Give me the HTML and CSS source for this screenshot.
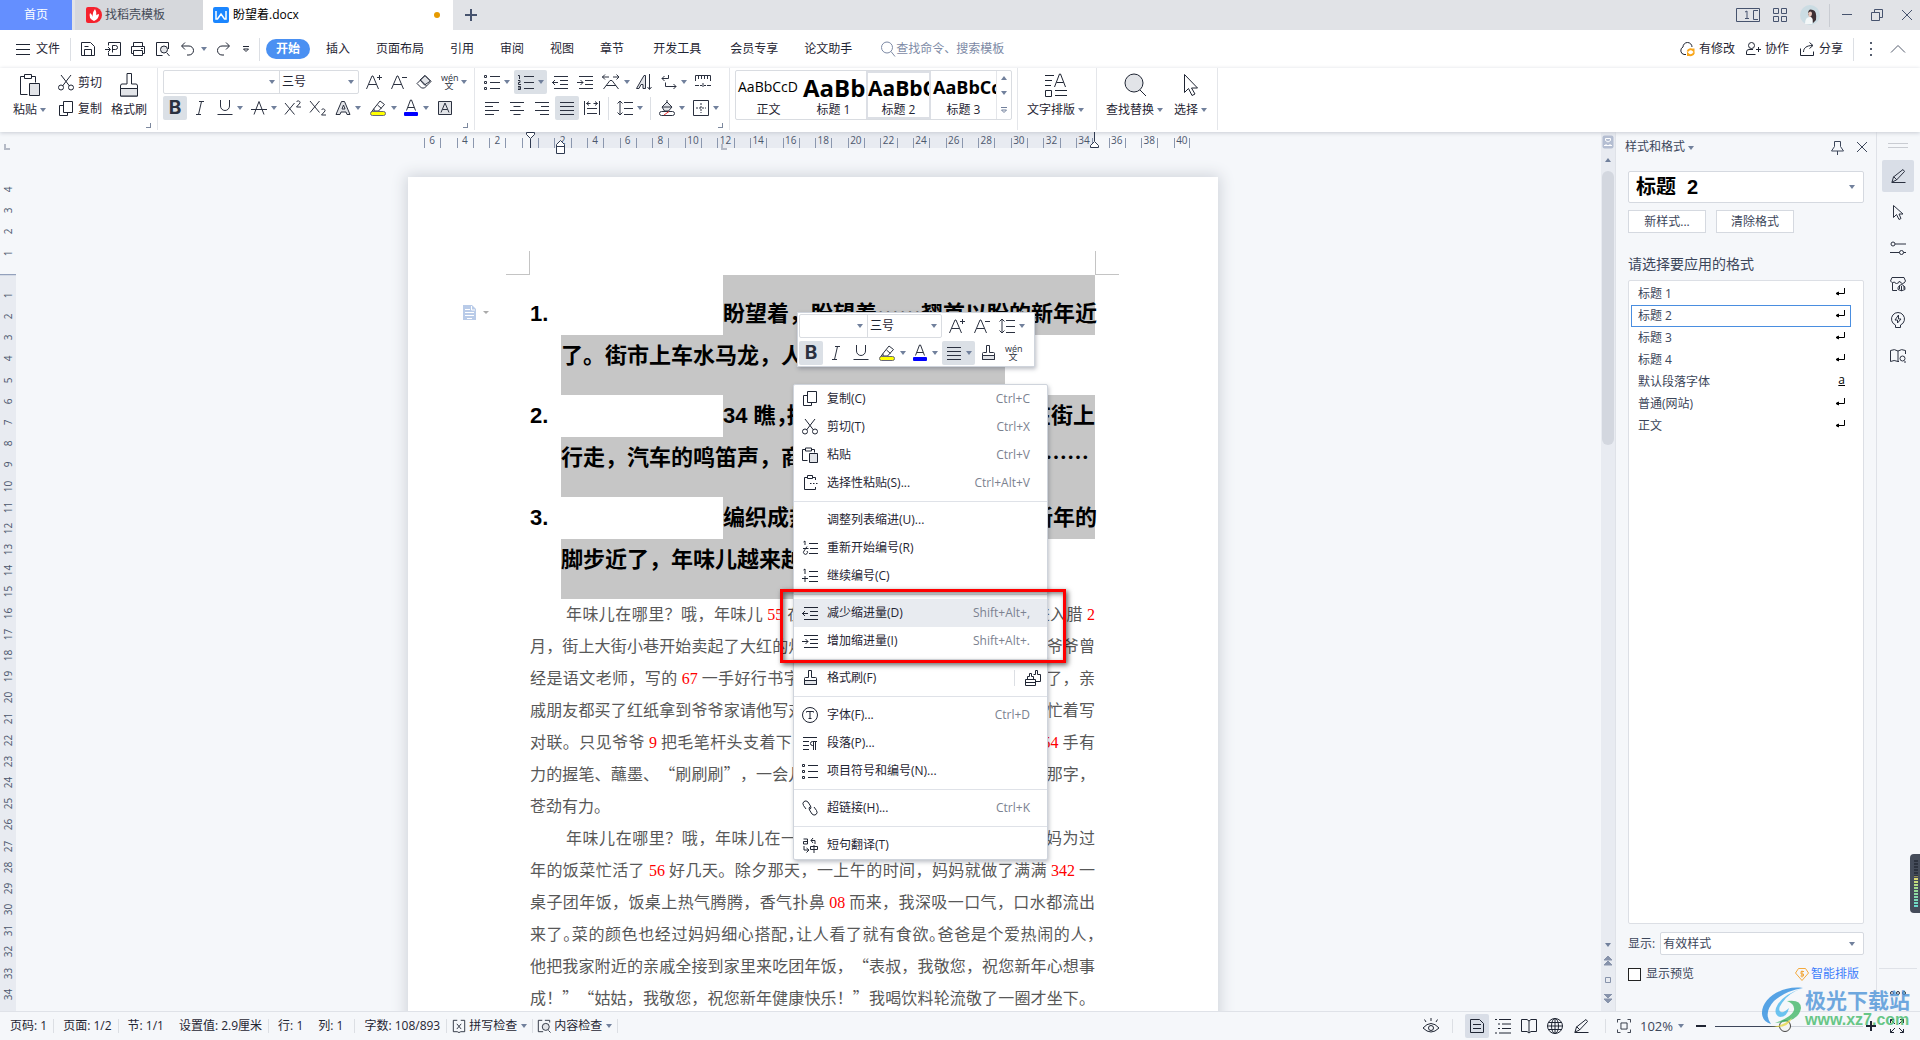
FILE: index.html
```html
<!DOCTYPE html>
<html lang="zh-CN">
<head>
<meta charset="utf-8">
<title>盼望着.docx</title>
<link rel="stylesheet" href="styles.css">
</head>
<body>
<svg class="sprite" aria-hidden="true">
  <symbol id="save" viewBox="0 0 16 16"><path d="M1.500 1.500h9l4 4v9h-13zM4.500 14V8.500h7V14M4.500 5.500h4"/></symbol>
  <symbol id="export" viewBox="0 0 16 16"><path d="M3.500 4.500v-3h12v13h-12v-3M0 8.500h5M3 6l2.500 2.500L3 11M7.500 11.500v-7h3a2 2 0 0 1 0 4h-3"/></symbol>
  <symbol id="print" viewBox="0 0 16 16"><path d="M3.500 5.500v-4h9v4M3.500 12.500h-2v-7h13v7h-2M3.500 9.500h9v5h-9zM11 7.500h2"/></symbol>
  <symbol id="preview" viewBox="0 0 16 16"><path d="M13.500 8V1.500h-12v13h6M12 12l2.500 3"/><circle cx="9" cy="8.500" r="3.500" class="g"/></symbol>
  <symbol id="undo" viewBox="0 0 16 16"><path d="M5 1.500L1.500 5 5 8.500M2 5h7a4.500 4.500 0 0 1 0 9H7"/></symbol>
  <symbol id="redo" viewBox="0 0 16 16"><path d="M11 1.500L14.500 5 11 8.500M14 5H7a4.500 4.500 0 0 0 0 9h2"/></symbol>
  <symbol id="more" viewBox="0 0 8 8"><path d="M1 1.500h6M1.500 4L4 6.500 6.500 4z"/></symbol>
  <symbol id="search" viewBox="0 0 16 16"><circle cx="7" cy="6.500" r="5.500"/><path d="M11 10.500l4 5"/></symbol>
  <symbol id="cloud" viewBox="0 0 16 16"><path d="M7 13.500H5a4 4 0 0 1-1-7.500 4.500 4.500 0 0 1 9 0"/><path class="o" d="M8.500 10.500a3.500 3.500 0 0 1 6-1V7.500M15 11.500a3.500 3.500 0 0 1-6 1.500v2" /></symbol>
  <symbol id="person" viewBox="0 0 16 16"><circle cx="6.500" cy="4.500" r="3"/><path d="M10.500 13.500H1.500V11a2.500 2.500 0 0 1 2.500-2.500h4M11 8.500h5M13.500 6v5"/></symbol>
  <symbol id="share" viewBox="0 0 16 16"><path d="M1.500 7.500v7h13v-4M4.500 11c0-4 3-6.500 9-6.500M10.500 1.500l3.500 3-3.500 3"/></symbol>
  <symbol id="up" viewBox="0 0 16 16"><path d="M1 11.500l7-7 7 7"/></symbol>
  <symbol id="paste" viewBox="0 0 24 24"><path d="M9.500 21.500h-7v-18h4M13.500 3.500h4v6M6.500 1.500h7v4h-7z"/><path class="g" d="M11.500 10.500h10v12h-10z"/></symbol>
  <symbol id="cut" viewBox="0 0 16 16"><path d="M3 0l8.500 11M13 0L4.500 11"/><circle cx="3" cy="12.500" r="2.500"/><circle cx="13" cy="12.500" r="2.500"/></symbol>
  <symbol id="copy" viewBox="0 0 16 16"><path d="M5.500 4.500h-4v10h8v-3M5.500 .500h9v11h-9z"/></symbol>
  <symbol id="brush" viewBox="0 0 20 24"><path d="M8 .500h4.500V11H17q1.500 0 1.500 2v10h-17V13q0-2 1.500-2h5z"/><path class="g" d="M1.500 15.500h17v7.500h-17z"/></symbol>
  <symbol id="brush-s" viewBox="0 0 16 16"><path d="M6.500 .500h3v7h4q1 0 1 1v6h-12v-6q0-1 1-1h3z"/><path class="g" d="M2.500 10.500h12v4h-12z"/></symbol>
  <symbol id="aplus" viewBox="0 0 16 16"><path d="M.500 15L6 2h1l5.500 13M2.500 10.500h8M11 3.500h5M13.500 1v5"/></symbol>
  <symbol id="aminus" viewBox="0 0 16 16"><path d="M.500 15L6 2h1l5.500 13M2.500 10.500h8M11 3.500h5"/></symbol>
  <symbol id="eraser" viewBox="0 0 16 16"><path class="g" d="M4 6l4.500 5 6-4L9 1.500z"/><path d="M1 9.500L9 1.500l6 6L8.500 14h-3zM4.500 6l6 6"/></symbol>
  <symbol id="italic" viewBox="0 0 16 16"><path d="M7 1.500h5M4 14.500h5M9.500 1.500l-3 13"/></symbol>
  <symbol id="under" viewBox="0 0 16 16"><path d="M3.500 0v6a4.500 4.500 0 0 0 9 0V0M.500 14.500h15"/></symbol>
  <symbol id="strike" viewBox="0 0 16 16"><path d="M3 14.500L8 1.500l5 13M0 9.500h16"/></symbol>
  <symbol id="sup" viewBox="0 0 18 16"><path d="M1 3l9.500 11.500M10.500 3L1 14.500M12.500 2c1-2 4-1 3.500 1L12.500 7H17"/></symbol>
  <symbol id="sub" viewBox="0 0 18 16"><path d="M1 1l9.500 11.500M10.500 1L1 12.500M12.500 10c1-2 4-1 3.500 1L12.500 15H17"/></symbol>
  <symbol id="afx" viewBox="0 0 16 16"><path class="g" d="M1 14.500L6.500 1.500h3L15 14.500h-3L11 12H6l-1 2.500zM7 9h3L8.500 5z"/></symbol>
  <symbol id="hl" viewBox="0 0 18 18"><path d="M5 9.500L11 2l4.500 3.500L9.500 12H5zM5 9.500L2.500 13H7M8.500 6l4 3.500"/><rect x="1.500" y="12.500" width="15" height="4" rx="2" fill="#ff0" stroke="#667"/></symbol>
  <symbol id="acol" viewBox="0 0 16 18"><path d="M3.500 11.500L7.500 1h1l4 10.500M5 8.500h6"/><rect x="1" y="13" width="14" height="4" rx="1" fill="#00f" stroke="none"/></symbol>
  <symbol id="abox" viewBox="0 0 16 16"><path class="g" d="M1.500 1.500h13v13h-13z"/><path d="M4 12.500L8 3l4 9.500M5.500 9.500h5"/></symbol>
  <symbol id="bul" viewBox="0 0 16 16"><path d="M6 2.500h10M6 8.500h10M6 14.500h10M.500 1.500h2v2h-2zM.500 7.500h2v2h-2zM.500 13.500h2v2h-2z"/></symbol>
  <symbol id="num" viewBox="0 0 16 16"><path d="M6 2.500h10M6 8.500h10M6 14.500h10M0 1.500h1.500V5M0 6.500h2v2H.500v2H3M0 12.500h2.500v3H0M0 14h2"/></symbol>
  <symbol id="outd" viewBox="0 0 16 16"><path d="M2 2.500h14M8 6.500h8M8 10.500h8M2 14.500h14M0 8.500h6M3 6L.500 8.500 3 11"/></symbol>
  <symbol id="ind" viewBox="0 0 16 16"><path d="M2 2.500h14M8 6.500h8M8 10.500h8M2 14.500h14M0 8.500h6M3.500 6L6 8.500 3.500 11"/></symbol>
  <symbol id="awide" viewBox="0 0 18 16"><path d="M1.500 15L8 6.500h2l6.500 8.500M4 11.500h10M0 3h7M3 .500L.500 3 3 5.500M11 3h6M14.500.500L17 3l-2.500 2.500"/></symbol>
  <symbol id="sort" viewBox="0 0 16 16"><path class="g" d="M.500 14.500L8 1.500h1.500v13H7v-4H5l-2 4z"/><path d="M13.500 0v15M11.500 13l2 2.500 2-2.500"/></symbol>
  <symbol id="wrap" viewBox="0 0 16 16"><path d="M7.500 1v3.500H1M3.500 2L1 4.500 3.500 7M4.500 8.500v4H15M12.500 10l2.500 2.500-2.500 2.500"/></symbol>
  <symbol id="tabs" viewBox="0 0 16 16"><path d="M.500 7V1.500h15V7M3.500 2v3M6.500 2v3M9.500 2v3M12.500 2v3M0 11.500h4M12 11.500h4M5 11.500h2M9 11.500h2M8 9v4"/></symbol>
  <symbol id="al" viewBox="0 0 16 16"><path d="M1 2.500h14M1 6.500h8M1 10.500h14M1 14.500h9"/></symbol>
  <symbol id="ac" viewBox="0 0 16 16"><path d="M1 2.500h14M4.500 6.500h7M1 10.500h14M4.500 14.500h7"/></symbol>
  <symbol id="ar" viewBox="0 0 16 16"><path d="M1 2.500h14M7 6.500h8M1 10.500h14M6 14.500h9"/></symbol>
  <symbol id="aj" viewBox="0 0 16 16"><path d="M1 2.500h14M1 6.500h14M1 10.500h14M1 14.500h14"/></symbol>
  <symbol id="dist" viewBox="0 0 16 16"><path d="M.500 1v14M15.500 1v14M2.500 3.500h4M9.500 3.500h4M5 1.500L2.500 3.500 5 5.500M11 1.500l2.500 2-2.500 2M3 8.500h10M3 13.500h10"/></symbol>
  <symbol id="lsp" viewBox="0 0 16 16"><path d="M7 2.500h9M7 8.500h9M7 14.500h9M3 1v14M.500 3.500L3 1l2.500 2.500M.500 12.500L3 15l2.500-2.500"/></symbol>
  <symbol id="fill" viewBox="0 0 16 16"><path class="g" d="M3 7l5-5 5 5-3.500 4h-4z"/><path d="M3 7l5-5 5 5M8 2V0M3 7h10"/><rect x=".500" y="11.500" width="15" height="4" rx="2" fill="#fff"/><path stroke="#e33" d="M5 15l5-3.500"/></symbol>
  <symbol id="bord" viewBox="0 0 16 16"><path d="M.500 .500h15v15h-15z"/><path stroke-dasharray="2 1" d="M8 3v10M3 8h10"/></symbol>
  <symbol id="typeset" viewBox="0 0 24 24"><path d="M1 2.500h9M1 7.500h7M1 12.500h6M1.500 17.500h6v6h-6zM11 17.500h12M11 22.500h12M10.500 14l5-13h1l5 13M12.500 9.500h7"/></symbol>
  <symbol id="find" viewBox="0 0 24 24"><circle class="g" cx="11" cy="10" r="9"/><path d="M17 17l6 6"/></symbol>
  <symbol id="cursor" viewBox="0 0 16 24"><path d="M1.500 1.500v18l4-4 3.500 7 3-1.500-3.500-6h6z"/></symbol>
  <symbol id="restart" viewBox="0 0 16 16"><path d="M7 3.500h9M8 8.500h8M7 13.500h9M1.500 2L3 1v4M1 8.500h5.500M5 6.500L2 11a2 2 0 1 0 3 0"/></symbol>
  <symbol id="cont" viewBox="0 0 16 16"><path d="M7 3.500h9M7 8.500h9M7 13.500h9M1.500 2L3 1v5M0 10.500h6M3 8v6"/></symbol>
  <symbol id="pspec" viewBox="0 0 16 16"><path d="M5 2.500H2.500v12h11V12M11 2.500h2.500V5M5.500 .500h5v3h-5zM8 8.500h1.500M11 8.500h1.500M14 8.500h1.500"/></symbol>
  <symbol id="pst" viewBox="0 0 16 16"><path d="M5.500 13.500h-5v-11h3M9.500 2.500h3v3M3.500 1h6v3h-6z"/><path class="g" d="M7.500 6.500h8v9h-8z"/></symbol>
  <symbol id="font" viewBox="0 0 16 16"><circle cx="8" cy="8" r="7.500"/><path d="M4.500 5.500v-1h7v1M8 4.500v7M6.500 11.500h3"/></symbol>
  <symbol id="para" viewBox="0 0 16 16"><path d="M1 2.500h14M1 6.500h6M1 10.500h6M1 14.500h6M11.500 7v8M13.500 7v8M15 6.500h-4.500a1.500 1.500 0 0 0 0 4h1"/></symbol>
  <symbol id="link" viewBox="0 0 16 16"><path d="M7.500 9.500q2.500-1 1-3.500L6 2Q4 0 2 1.500T1.500 5.500L4 9M8.500 6.500q-2.500 1-1 3.500L10 14q2 2 4 .500t.500-4L12 7"/></symbol>
  <symbol id="trans" viewBox="0 0 16 16"><path d="M1.500 2h4v5h-4V4.500h4M9 3.500h4V7M11 1L9 3.500 11 6M2 9v4h4M4.500 11L7 13l-2.500 2.500M8.500 9.500h7v3h-7zM12 8v8"/></symbol>
  <symbol id="pin" viewBox="0 0 16 16"><path d="M5.500 2.500h6v5l3 4.500h-12l3-4.500zM8.500 12v4"/></symbol>
  <symbol id="x" viewBox="0 0 12 12"><path d="M1 1l10 10M11 1L1 11"/></symbol>
  <symbol id="ret" viewBox="0 0 10 8"><path d="M9.500 0v5.500H1M3.500 4v3L1 5.500z" /></symbol>
  <symbol id="pen" viewBox="0 0 16 16"><path d="M1.500 14.500h14M2 14l1.500-5L13 1.500l1.500 2L6.500 12 2 14M3.500 8.500L7 12"/></symbol>
  <symbol id="arrow" viewBox="0 0 16 16"><path d="M3.500 1.500v12l3-3 2.500 5 2-1-2-4.500h4z"/></symbol>
  <symbol id="slid" viewBox="0 0 16 16"><circle cx="3" cy="4" r="2"/><circle cx="11.500" cy="12.500" r="2"/><path d="M5 4h11M0 12.500h9.500M13.500 12.500H16"/></symbol>
  <symbol id="shop" viewBox="0 0 16 16"><path d="M7 14.500H2.500V7M2 1.500h12L15.500 5q-1 2.500-3 2.500Q10 7 9.500 5 9 7.500 6.500 7.500 5 7.500 4.500 6 2 8 .500 5zM8 13.500q-.500-4 4-5 4 2 3 5-3.500 2.500-7 0zM11.500 15V10M9.500 10v3M14 10v3"/></symbol>
  <symbol id="bulb" viewBox="0 0 16 16"><path d="M5.500 13a6.500 6.500 0 1 1 5 0v2.500h-5zM8.500 3L5 8h2.500v3L11 7H8.500z"/></symbol>
  <symbol id="bookq" viewBox="0 0 16 16"><path d="M8 3v10.500M9 13.500H8q-4-2-7.500 0v-11q4-2 7.500.500 3.500-2.500 7.500-.500V6"/><circle cx="12.500" cy="10.500" r="2.500"/><path d="M15 13v2"/></symbol>
  <symbol id="book" viewBox="0 0 16 16"><path d="M8 3v12M.500 1.500H6L8 3l2-1.500h5.500v12H10L8 15l-2-1.500H.500z"/></symbol>
  <symbol id="spell" viewBox="0 0 16 16"><path d="M6 1.500H1.500v13H6l2 1 2-1h4.500v-13H10M5.500 5.500l5 6M10.500 5.500l-5 6"/></symbol>
  <symbol id="chk" viewBox="0 0 16 16"><path d="M6 1.500H1.500v13H7M9 1.500h5.500V4M13 13l2.500 2.500"/><circle class="g" cx="10" cy="9" r="4"/></symbol>
  <symbol id="eye" viewBox="0 0 18 16"><path d="M1 10q8-9 16 0-8 8-16 0zM9 3V0M4 4L2.500 1.500M14 4l1.500-2.500"/><circle cx="9" cy="10" r="2.500"/></symbol>
  <symbol id="doc" viewBox="0 0 16 16"><path d="M1.500 1.500h9l4 4v9h-13zM4 6.500h8M4 10.500h8"/></symbol>
  <symbol id="outl" viewBox="0 0 16 16"><path d="M0 1.500h2M4 1.500h12M3 6h2M7 6h9M3 10.500h2M7 10.500h9M0 15h2M4 15h12"/></symbol>
  <symbol id="globe" viewBox="0 0 16 16"><circle cx="8" cy="8" r="7.500"/><ellipse cx="8" cy="8" rx="3.500" ry="7.500"/><path d="M8 .500v15M.500 8h15M2 4.500h12M2 11.500h12"/></symbol>
  <symbol id="fit" viewBox="0 0 16 16"><path d="M.500 4V.500H4M12 .500h3.500V4M.500 12v3.500H4M12 15.500h3.500V12M4.500 4.500h7v7h-7z"/></symbol>
  <symbol id="expand" viewBox="0 0 16 16"><path d="M1.500 5V1.500H5M11 1.500h3.500V5M1.500 11v3.500H5M11 14.500h3.500V11M1.500 1.500L6 6M14.500 1.500L10 6M1.500 14.500L6 10M14.500 14.500L10 10"/></symbol>
</svg>

<header class="titlebar">
  <button class="tab tab-home">首页</button>
  <button class="tab tab-find"><svg class="i16" viewBox="0 0 16 16"><path d="M2 0h6a8 8 0 0 1 0 16H2q-2 0-2-2V2q0-2 2-2z" fill="#f5222d" stroke="none"/><path d="M8 14Q2 11 4 6q3 2 4 8zM8 14Q5 7 9 2q3 5-1 12zM8 14q0-6 5-7 0 5-5 7z" fill="#fff" stroke="none"/></svg>找稻壳模板</button>
  <button class="tab tab-doc"><svg class="i16" viewBox="0 0 16 16"><rect width="16" height="16" rx="2" fill="#1b86ff" stroke="none"/><path d="M3 4v8h1.500L8 7l3.500 5H13V4" stroke="#fff" stroke-width="1.500"/></svg>盼望着.docx<i class="dirty"></i></button>
  <button class="newtab" aria-label="新建"><svg class="i12" viewBox="0 0 12 12"><path d="M6 0v12M0 6h12" stroke-width="2"/></svg></button>
  <div class="wintools">
    <svg width="24" height="14" viewBox="0 0 24 14"><path d="M.500 .500h23v13H.500zM17.500 2.500v9M17.500 2.500H22M17.500 11.500H22M9 4l2-1v7.500M9 10.500h4"/></svg>
    <svg class="i14" viewBox="0 0 14 14"><path d="M.500 .500h5v5h-5zM8.500 .500h5v5h-5zM.500 8.500h5v5h-5zM8.500 8.500h5v5h-5z"/></svg>
    <svg class="avatar" viewBox="0 0 20 20"><circle cx="10" cy="10" r="10" fill="#cbdce3" stroke="none"/><path d="M8 9Q8 3 13 5q4 1 3 10l-3 3z" fill="#3b2f33" stroke="none"/><path d="M8 8q3-3 4 0 0 4-3 4z" fill="#eac9bd" stroke="none"/><path d="M5 19q0-8 6-7 3 2 1 7z" fill="#f3f7f8" stroke="none"/></svg>
    <i class="vline"></i>
    <svg class="i12" viewBox="0 0 12 12"><path d="M1 5.500h10"/></svg>
    <svg class="i12" viewBox="0 0 12 12"><path d="M.500 3.500h8v8h-8zM3.500 3V.500h8v8H9"/></svg>
    <svg class="i12"><use href="#x"/></svg>
  </div>
</header>

<nav class="menubar">
  <button class="file"><svg class="i16" viewBox="0 0 16 16"><path d="M1 3.500h14M1 8.500h14M1 13.500h14"/></svg>文件</button>
  <i class="vline"></i>
  <div class="quick">
    <svg class="i16"><use href="#save"/></svg><svg class="i16"><use href="#export"/></svg><svg class="i16"><use href="#print"/></svg><svg class="i16"><use href="#preview"/></svg><svg class="i16"><use href="#undo"/></svg>
  </div>
  <i class="caret"></i>
  <svg class="i16 redo"><use href="#redo"/></svg>
  <svg class="i8"><use href="#more"/></svg>
  <i class="vline"></i>
  <div class="menus">
    <button class="on">开始</button><button>插入</button><button>页面布局</button><button>引用</button><button>审阅</button><button>视图</button><button>章节</button><button class="wide">开发工具</button><button class="wide">会员专享</button><button>论文助手</button>
  </div>
  <label class="search"><svg class="i16"><use href="#search"/></svg><input placeholder="查找命令、搜索模板" aria-label="查找"></label>
  <div class="cloud">
    <a href="#"><svg class="i16"><use href="#cloud"/></svg>有修改</a>
    <a href="#"><svg class="i16"><use href="#person"/></svg>协作</a>
    <a href="#"><svg class="i16"><use href="#share"/></svg>分享</a>
    <i class="vline"></i><i class="dots"></i><svg class="i16"><use href="#up"/></svg>
  </div>
</nav>

<section class="ribbon">
  <div class="group clip">
    <button class="big"><svg class="i24"><use href="#paste"/></svg><span>粘贴<i class="caret"></i></span></button>
    <div class="stack">
      <button><svg class="i16"><use href="#cut"/></svg>剪切</button>
      <button><svg class="i16"><use href="#copy"/></svg>复制</button>
    </div>
    <button class="big"><svg width="20" height="24"><use href="#brush"/></svg><span>格式刷</span></button>
    <i class="corner"></i>
  </div>
  <div class="group rows">
    <div class="row">
      <div class="fonts">
        <label class="field fam"><select aria-label="字体"><option></option></select><i class="caret"></i></label>
        <label class="field size"><select aria-label="字号"><option>三号</option></select><i class="caret"></i></label>
      </div>
      <button class="tb"><svg class="i16"><use href="#aplus"/></svg></button>
      <button class="tb"><svg class="i16"><use href="#aminus"/></svg></button>
      <button class="tb"><svg class="i16"><use href="#eraser"/></svg></button>
      <button class="tb dd"><span class="wen">wén<b>文</b></span><i class="caret"></i></button>
    </div>
    <div class="row">
      <button class="tb on bold">B</button>
      <button class="tb"><svg class="i16"><use href="#italic"/></svg></button>
      <button class="tb dd"><svg class="i16"><use href="#under"/></svg><i class="caret"></i></button>
      <button class="tb dd"><svg class="i16"><use href="#strike"/></svg><i class="caret"></i></button>
      <button class="tb"><svg width="18" height="16"><use href="#sup"/></svg></button>
      <button class="tb"><svg width="18" height="16"><use href="#sub"/></svg></button>
      <button class="tb dd"><svg class="i16"><use href="#afx"/></svg><i class="caret"></i></button>
      <button class="tb dd"><svg class="i18"><use href="#hl"/></svg><i class="caret"></i></button>
      <button class="tb dd"><svg width="16" height="18"><use href="#acol"/></svg><i class="caret"></i></button>
      <button class="tb"><svg class="i16"><use href="#abox"/></svg></button>
    </div>
    <i class="corner"></i>
  </div>
  <div class="group rows">
    <div class="row">
      <button class="tb dd"><svg class="i16"><use href="#bul"/></svg><i class="caret"></i></button>
      <button class="tb dd on"><svg class="i16"><use href="#num"/></svg><i class="caret"></i></button>
      <button class="tb"><svg class="i16"><use href="#outd"/></svg></button>
      <button class="tb"><svg class="i16"><use href="#ind"/></svg></button>
      <button class="tb dd"><svg width="18" height="16"><use href="#awide"/></svg><i class="caret"></i></button>
      <button class="tb"><svg class="i16"><use href="#sort"/></svg></button>
      <button class="tb dd"><svg class="i16"><use href="#wrap"/></svg><i class="caret"></i></button>
      <button class="tb"><svg class="i16"><use href="#tabs"/></svg></button>
    </div>
    <div class="row">
      <button class="tb"><svg class="i16"><use href="#al"/></svg></button>
      <button class="tb"><svg class="i16"><use href="#ac"/></svg></button>
      <button class="tb"><svg class="i16"><use href="#ar"/></svg></button>
      <button class="tb on"><svg class="i16"><use href="#aj"/></svg></button>
      <button class="tb"><svg class="i16"><use href="#dist"/></svg></button>
      <i class="vline"></i>
      <button class="tb dd"><svg class="i16"><use href="#lsp"/></svg><i class="caret"></i></button>
      <i class="vline"></i>
      <button class="tb dd"><svg class="i16"><use href="#fill"/></svg><i class="caret"></i></button>
      <button class="tb dd"><svg class="i16"><use href="#bord"/></svg><i class="caret"></i></button>
    </div>
    <i class="corner"></i>
  </div>
  <div class="group gal">
    <div class="gallery">
      <button><span class="s0">AaBbCcD</span>正文</button>
      <button><span class="s1">AaBb</span>标题 1</button>
      <button class="on"><span class="s2">AaBbC</span>标题 2</button>
      <button><span class="s3">AaBbCc</span>标题 3</button>
      <div class="gscroll"><i class="caret flip"></i><i class="caret"></i><svg class="i8"><use href="#more"/></svg></div>
    </div>
  </div>
  <div class="group tools"><button class="big"><svg class="i24"><use href="#typeset"/></svg><span>文字排版<i class="caret"></i></span></button></div>
  <div class="group tools"><button class="big"><svg class="i24"><use href="#find"/></svg><span>查找替换<i class="caret"></i></span></button>
  <button class="big"><svg width="16" height="24"><use href="#cursor"/></svg><span>选择<i class="caret"></i></span></button></div>
</section>

<main class="work">
  <div class="vruler"><i class="tabmark"></i>
    <div class="vnums"><span>4</span><span>3</span><span>2</span><span>1</span><span class="zero"></span><span>1</span><span>2</span><span>3</span><span>4</span><span>5</span><span>6</span><span>7</span><span>8</span><span>9</span><span>10</span><span>11</span><span>12</span><span>13</span><span>14</span><span>15</span><span>16</span><span>17</span><span>18</span><span>19</span><span>20</span><span>21</span><span>22</span><span>23</span><span>24</span><span>25</span><span>26</span><span>27</span><span>28</span><span>29</span><span>30</span><span>31</span><span>32</span><span>33</span><span>34</span></div>
  </div>
  <div class="canvas">
    <div class="hruler"><div class="hnums"><span>6</span><span></span><span>4</span><span></span><span>2</span><span></span><span></span><span></span><span>2</span><span></span><span>4</span><span></span><span>6</span><span></span><span>8</span><span></span><span>10</span><span></span><span>12</span><span></span><span>14</span><span></span><span>16</span><span></span><span>18</span><span></span><span>20</span><span></span><span>22</span><span></span><span>24</span><span></span><span>26</span><span></span><span>28</span><span></span><span>30</span><span></span><span>32</span><span></span><span>34</span><span></span><span>36</span><span></span><span>38</span><span></span><span>40</span></div>
      <svg class="mk first" width="9" height="16" viewBox="0 0 9 16"><path fill="#fff" d="M.500 .500h8v2l-4 4-4-4z"/><path d="M4.500 7v9"/></svg>
      <svg class="mk hang" width="9" height="14" viewBox="0 0 9 14"><path fill="#fff" d="M.500 13.500v-9l4-4 4 4v9zM.500 6.500h8"/></svg>
      <svg class="mk right" width="9" height="16" viewBox="0 0 9 16"><path fill="#fff" d="M.500 15.500v-2l4-4 4 4v2zM4.500 0v9"/></svg>
      <i class="mk tabmark"></i>
    </div>
    <article class="page">
      <div class="crops"><i></i><i></i></div>
      <svg class="smart" width="28" height="16" viewBox="0 0 28 16"><path d="M0 0h9l4 4v11H0z" fill="#b9cbe8" stroke="none"/><path stroke="#fff" d="M2 4.500h5M2 7.500h9M2 10.500h9M4 13.500h5M8.500 1v4H12"/><path d="M20 6h6l-3 3z" fill="#aaa" stroke="none"/></svg>
      <ol class="heads">
        <li><div class="h first"><b>1.</b><span>盼望着，盼望着<em class="dot">……</em>翘首以盼的新年近</span></div><div class="h next"><span>了。街市上车水马龙，人来人往，热闹非凡。</span></div></li>
        <li><div class="h"><b>2.</b><span>34 瞧<em class="half">，</em>拥挤的人群，三三两两走在街上</span></div><div class="h next full"><span>行走，汽车的鸣笛声，商贩的叫卖声，孩子的笑声<em class="dot">……</em></span></div></li>
        <li><div class="h"><b>3.</b><span>编织成热闹而欢快的乐章，预示新年的</span></div><div class="h next"><span>脚步近了，年味儿越来越浓了。</span></div></li>
      </ol>
      <div class="body">
        <p class="ind">年味儿在哪里？哦，年味儿 <b>55</b> 在大街小巷的灯笼里。每年只要一进入腊 <b>2</b></p>
        <p>月，街上大街小巷开始卖起了大红的灯笼、对联和各种各样的年货。我的爷爷曾</p>
        <p>经是语文老师，写的 <b>67</b> 一手好行书字体，每逢到年关他就忙得不可开交了，亲</p>
        <p>戚朋友都买了红纸拿到爷爷家请他写对联，贴在家门口，爷爷一整天都在忙着写</p>
        <p>对联。只见爷爷 <b>9</b> 把毛笔杆头支着下巴，沉思了一会儿，然后提起笔用 <b>54</b> 手有</p>
        <p>力的握笔、蘸墨、“刷刷刷”，一会儿工夫一副对联就写好了，瞧瞧他的那字，</p>
        <p class="end">苍劲有力。</p>
        <p class="ind">年味儿在哪里？哦，年味儿在一桌热气腾腾的年夜饭里，奶奶和妈妈为过</p>
        <p>年的饭菜忙活了 <b>56</b> 好几天。除夕那天，一上午的时间，妈妈就做了满满 <b>342</b> 一</p>
        <p>桌子团年饭，饭桌上热气腾腾，香气扑鼻 <b>08</b> 而来，我深吸一口气，口水都流出</p>
        <p class="tight">来了。菜的颜色也经过妈妈细心搭配，让人看了就有食欲。爸爸是个爱热闹的人，</p>
        <p>他把我家附近的亲戚全接到家里来吃团年饭，“表叔，我敬您，祝您新年心想事</p>
        <p>成！”“姑姑，我敬您，祝您新年健康快乐！”我喝饮料轮流敬了一圈才坐下。</p>
      </div>

      <div class="mini">
        <div class="row">
          <div class="fonts">
            <label class="field fam"><select aria-label="字体"><option></option></select><i class="caret"></i></label>
            <label class="field size"><select aria-label="字号"><option>三号</option></select><i class="caret"></i></label>
          </div>
          <button class="tb"><svg class="i16"><use href="#aplus"/></svg></button>
          <button class="tb"><svg class="i16"><use href="#aminus"/></svg></button>
          <button class="tb dd"><svg class="i16"><use href="#lsp"/></svg><i class="caret"></i></button>
        </div>
        <div class="row">
          <button class="tb on bold">B</button>
          <button class="tb"><svg class="i16"><use href="#italic"/></svg></button>
          <button class="tb"><svg class="i16"><use href="#under"/></svg></button>
          <button class="tb dd"><svg class="i18"><use href="#hl"/></svg><i class="caret"></i></button>
          <button class="tb dd"><svg width="16" height="18"><use href="#acol"/></svg><i class="caret"></i></button>
          <button class="tb dd on"><svg class="i16"><use href="#aj"/></svg><i class="caret"></i></button>
          <button class="tb"><svg class="i16"><use href="#brush-s"/></svg></button>
          <button class="tb"><span class="wen">wén<b>文</b></span></button>
        </div>
      </div>

      <div class="ctx">
        <button><svg class="i16"><use href="#copy"/></svg>复制(C)<kbd>Ctrl+C</kbd></button>
        <button><svg class="i16"><use href="#cut"/></svg>剪切(T)<kbd>Ctrl+X</kbd></button>
        <button><svg class="i16"><use href="#pst"/></svg>粘贴<kbd>Ctrl+V</kbd></button>
        <button><svg class="i16"><use href="#pspec"/></svg>选择性粘贴(S)...<kbd>Ctrl+Alt+V</kbd></button>
        <hr>
        <button><i class="i16"></i>调整列表缩进(U)...</button>
        <button><svg class="i16"><use href="#restart"/></svg>重新开始编号(R)</button>
        <button><svg class="i16"><use href="#cont"/></svg>继续编号(C)</button>
        <hr>
        <button class="on"><svg class="i16"><use href="#outd"/></svg>减少缩进量(D)<kbd>Shift+Alt+,</kbd></button>
        <button><svg class="i16"><use href="#ind"/></svg>增加缩进量(I)<kbd>Shift+Alt+.</kbd></button>
        <hr>
        <button class="split"><svg class="i16"><use href="#brush-s"/></svg>格式刷(F)<i class="vline"></i><svg class="i18" viewBox="0 0 18 18"><path d="M3.500 10.500v-3h2v-3h2v3h2v3M1.500 16.500v-6h10v6zM1.500 13.500h10M9.500 5.500h2v-4h2v4h3v7H12"/></svg></button>
        <hr>
        <button><svg class="i16"><use href="#font"/></svg>字体(F)...<kbd>Ctrl+D</kbd></button>
        <button><svg class="i16"><use href="#para"/></svg>段落(P)...</button>
        <button><svg class="i16"><use href="#bul"/></svg>项目符号和编号(N)...</button>
        <hr>
        <button><svg class="i16"><use href="#link"/></svg>超链接(H)...<kbd>Ctrl+K</kbd></button>
        <hr>
        <button><svg class="i16"><use href="#trans"/></svg>短句翻译(T)</button>
      </div>
      <div class="redbox"></div>
    </article>
  </div>

  <div class="vscroll">
    <svg width="12" height="14" viewBox="0 0 12 14"><rect x=".500" y=".500" width="11" height="13" rx="2" fill="#b4bed2" stroke="none"/><path d="M3.500 3.500h5v2L6 7 3.500 5.500zM2 10.500h8M4 9v2M8 9v2" stroke="#fff"/></svg>
    <i class="caret flip"></i>
    <div class="thumb"></div>
    <div class="nav"><i class="caret"></i><svg class="i10" viewBox="0 0 10 10"><path d="M5 0l4 4H1zM5 5l4 4H1z"/></svg><svg class="i10" viewBox="0 0 10 10"><path class="o2" d="M2.500 2.500h5v5h-5z"/></svg><svg class="i10" viewBox="0 0 10 10"><path d="M5 4l4-4H1zM5 9l4-4H1z"/></svg></div>
  </div>

  <aside class="panel">
    <div class="phead"><span>样式和格式<i class="caret"></i></span><svg class="i16"><use href="#pin"/></svg><svg class="i12"><use href="#x"/></svg></div>
    <label class="field cur"><select aria-label="当前样式"><option>标题&nbsp; 2</option></select><i class="caret"></i></label>
    <div class="pbtns"><button>新样式...</button><button>清除格式</button></div>
    <h2>请选择要应用的格式</h2>
    <div class="styles">
      <button>标题 1<svg width="10" height="8"><use href="#ret"/></svg></button>
      <button class="on">标题 2<svg width="10" height="8"><use href="#ret"/></svg></button>
      <button>标题 3<svg width="10" height="8"><use href="#ret"/></svg></button>
      <button>标题 4<svg width="10" height="8"><use href="#ret"/></svg></button>
      <button>默认段落字体<u>a</u></button>
      <button>普通(网站)<svg width="10" height="8"><use href="#ret"/></svg></button>
      <button>正文<svg width="10" height="8"><use href="#ret"/></svg></button>
    </div>
    <div class="show"><label for="show">显示:</label><span class="field"><select id="show"><option>有效样式</option></select><i class="caret"></i></span></div>
    <div class="prev"><label><input type="checkbox">显示预览</label><a href="#"><svg class="i14" viewBox="0 0 14 14"><path d="M3.500 1.500h7L13.500 6 7 13.500.500 6zM9 4.500H6v2.500h2.500V9H5.500M7 3.500v7"/></svg>智能排版</a></div>
  </aside>

  <aside class="side">
    <i class="grip"></i>
    <button class="on"><svg class="i16"><use href="#pen"/></svg></button>
    <button><svg class="i16"><use href="#arrow"/></svg></button>
    <button><svg class="i16"><use href="#slid"/></svg></button>
    <button><svg class="i16"><use href="#shop"/></svg></button>
    <button><svg class="i16"><use href="#bulb"/></svg></button>
    <button><svg class="i16"><use href="#bookq"/></svg></button>
    <i class="rule"></i>
    <svg width="16" height="6" viewBox="0 0 16 6"><circle cx="2" cy="3" r="1.500"/><circle cx="8" cy="3" r="1.500"/><circle cx="14" cy="3" r="1.500"/></svg>
  </aside>
  <div class="meter"></div>
</main>

<footer class="status">
  <span>页码: 1</span><i class="vline"></i><span>页面: 1/2</span><i class="vline"></i><span>节: 1/1</span><span>设置值: 2.9厘米</span><i class="vline"></i><span>行: 1</span><span>列: 1</span><i class="vline far"></i><span>字数: 108/893</span><i class="vline near"></i>
  <button><svg class="i14"><use href="#spell"/></svg>拼写检查<i class="caret"></i></button><i class="vline"></i>
  <button><svg class="i14"><use href="#chk"/></svg>内容检查<i class="caret"></i></button><i class="vline"></i>
  <div class="views">
    <svg width="18" height="16"><use href="#eye"/></svg><i class="vline"></i>
    <button class="on"><svg class="i16"><use href="#doc"/></svg></button>
    <button><svg class="i16"><use href="#outl"/></svg></button>
    <button><svg class="i16"><use href="#book"/></svg></button>
    <button><svg class="i16"><use href="#globe"/></svg></button>
    <button><svg class="i16"><use href="#pen"/></svg></button>
    <i class="vline"></i>
  </div>
  <div class="zoom">
    <svg class="i14"><use href="#fit"/></svg><span>102%</span><i class="caret"></i>
    <svg class="i12" viewBox="0 0 12 12"><path d="M1 6h10" stroke-width="2"/></svg>
    <input type="range" min="0" max="100" value="47" aria-label="缩放">
    <svg class="i12" viewBox="0 0 12 12"><path d="M1 6h10M6 1v10" stroke-width="2"/></svg>
    <svg class="i16"><use href="#expand"/></svg>
  </div>
</footer>

<div class="mark">
  <svg width="44" height="42" viewBox="0 0 44 42"><g stroke="none"><path fill="#2f8fe0" d="M42 1C20-2 0 12 1 27q1 8 9 10Q2 26 13 14 24 4 42 1z"/><path fill="#4bb7ee" d="M42 1Q20 8 15 21q-2 7 4 9 7 0 9-9-5 5-8 4-4-2 1-9Q27 6 42 1z"/><path fill="#44b86a" d="M26 14q14-2 14 7-2 14-26 15 17-6 19-13 1-6-7-9z"/><path fill="#e8d94a" d="M4 40q16 1 27-9-4 10-17 9z"/></g></svg>
  <div><strong>极光下载站</strong><span>www.xz7.com</span></div>
</div>
</body>
</html>
```
FILE: styles.css
```css
* { box-sizing: border-box; }
body {
  margin: 0;
  height: 100vh;
  display: flex;
  flex-direction: column;
  overflow: hidden;
  position: relative;
  background: #f5f7fa;
  color: #1f2533;
  font: 12px/16px "Open Sans", "Noto Sans CJK SC", sans-serif;
}
button, select, input { font: inherit; color: inherit; }
button { border: 0; padding: 0; background: none; }
a { color: inherit; text-decoration: none; }
svg { fill: none; stroke: currentColor; flex: none; display: block; }
.sprite { display: none; }
.g { fill: #e2e4e8; }
.o { stroke: #f9a61a; stroke-width: 2; }
.i8 { width: 8px; height: 8px; }
.i10 { width: 10px; height: 10px; }
.i12 { width: 12px; height: 12px; }
.i14 { width: 14px; height: 14px; }
.i16 { width: 16px; height: 16px; }
.i18 { width: 18px; height: 18px; }
.i24 { width: 24px; height: 24px; }
.caret {
  display: inline-block;
  flex: none;
  border: 3px solid transparent;
  border-top: 4px solid #71809c;
  border-bottom: 0;
}
.caret.flip { transform: rotate(180deg); }
.vline { flex: none; width: 1px; height: 23px; background: #dcdfe4; }

/* title bar */
.titlebar { height: 30px; flex: none; display: flex; background: #e1e3e7; }
.tab { display: flex; align-items: center; gap: 4px; }
.tab-home { width: 72px; justify-content: center; background: #648fff; color: #fff; margin-right: 3px; }
.tab-find { width: 128px; padding-left: 11px; gap: 3px; background: #d6d8dc; color: #444a57; }
.tab-doc { width: 250px; padding: 0 13px 0 10px; background: #fff; color: #000; }
.dirty { width: 6px; height: 6px; border-radius: 3px; background: #e69a00; margin-left: auto; }
.newtab { width: 36px; display: flex; align-items: center; justify-content: center; color: #46536e; }
.wintools { margin-left: auto; display: flex; align-items: center; padding-right: 4px; gap: 13px; color: #46536e; }
.wintools .i12 { margin-left: 2px; margin-right: 3px; }
.wintools .vline { margin: 0 -4px 0 -4px; background: #c9ccd2; }
.avatar { width: 20px; height: 20px; }

/* menu bar */
.menubar { height: 38px; flex: none; display: flex; align-items: center; background: #fff; padding-left: 15px; }
.file { display: flex; align-items: center; gap: 5px; margin-right: 10px; }
.quick { display: flex; gap: 9px; margin: 0 5px 0 9px; }
.redo { margin: 0 11px 0 8px; }
.menubar .i8 { margin-right: 9px; }
.menus { display: flex; padding-left: 6px; }
.menus button { height: 20px; padding: 0 10px; margin-right: 6px; border-radius: 10px; }
.menus .wide { margin: 0 6px 0 3px; }
.menus .on { background: #4a90f2; color: #fff; font-weight: bold; }
.search { display: flex; align-items: center; margin-left: 12px; color: #7d8aa5; }
.search input { border: 0; outline: 0; padding: 0; width: 130px; }
.search input::placeholder { color: #7d8aa5; }
.cloud { margin-left: auto; display: flex; align-items: center; gap: 10px; padding-right: 14px; color: #555d6e; }
.cloud a { display: flex; align-items: center; gap: 4px; color: #1f2533; }
.dots { width: 2px; height: 14px; margin: 0 8px 0 6px; background: repeating-linear-gradient(#555d6e 0 2px, transparent 2px 6px); }

/* ribbon */
.ribbon { height: 64px; flex: none; display: flex; background: #fff; box-shadow: 0 1px 4px #c8ccd4; position: relative; z-index: 2; }
.group { position: relative; height: 62px; border-right: 1px solid #e4e6ea; }
.corner { position: absolute; right: 6px; bottom: 2px; width: 5px; height: 5px; border: solid #7c889e; border-width: 0 1px 1px 0; }
.big { display: flex; flex-direction: column; align-items: center; gap: 5px; padding-top: 5px; height: 62px; }
.big span { display: flex; align-items: center; gap: 3px; }
.clip { display: flex; padding-left: 13px; width: 158px; }
.stack { display: flex; flex-direction: column; gap: 10px; padding: 7px 9px 0 12px; }
.stack button { display: flex; align-items: center; gap: 4px; }
.rows { padding: 2px 4px 0 5px; display: flex; flex-direction: column; gap: 2px; }
.rows + .rows { padding-right: 7px; }
.row { display: flex; gap: 1px; align-items: center; height: 24px; }
.tb { width: 24px; height: 24px; display: flex; align-items: center; justify-content: center; border-radius: 2px; color: #2b3140; }
.tb.dd { width: 33px; justify-content: flex-start; padding-left: 4px; gap: 4px; }
.tb.on { background: #dbe0e6; }
.bold { font: bold 19px/24px Inter, sans-serif; }
.row .vline { margin: 0 3px; }
.wen { width: 16px; font-size: 9px; line-height: 8px; text-align: center; }
.wen b { display: block; font-weight: normal; }
.fonts { display: flex; height: 24px; border: 1px solid #d9dce1; border-radius: 2px; margin-right: 2px; background: #fff; }
.field { display: flex; align-items: center; position: relative; }
.field select { appearance: none; border: 0; outline: 0; background: none; flex: 1; width: 100%; height: 100%; padding: 0 0 0 2px; }
.field .caret { position: absolute; right: 4px; }
.fam { width: 116px; border-right: 1px solid #d9dce1; }
.size { width: 78px; }
.gal { padding: 2px 5px 0 5px; }
.gallery { display: flex; height: 50px; border: 1px solid #d9dce1; border-radius: 2px; }
.gallery button { width: 65px; display: flex; flex-direction: column; align-items: center; overflow: hidden; }
.gallery .on { border: 2px solid #dcdfe5; }
.gallery span { height: 31px; align-self: flex-start; padding-left: 2px; color: #000; white-space: nowrap; font-weight: bold; }
.gallery .on span { height: 29px; padding-left: 0; }
.gallery .s0 { font-size: 14px; line-height: 32px; font-weight: normal; }
.gallery .s1 { font-size: 24px; line-height: 34px; }
.gallery .s2 { font-size: 21px; line-height: 30px; }
.gallery .s3 { font-size: 18px; line-height: 32px; }
.gscroll { width: 15px; border-left: 1px solid #e4e6ea; display: flex; flex-direction: column; justify-content: space-around; align-items: center; color: #71809c; }
.tools { display: flex; gap: 14px; padding: 0 12px 0 9px; }
.tools + .tools { padding-right: 10px; gap: 11px; }

/* work area */
.work { flex: 1; min-height: 0; display: flex; position: relative; }
.tabmark { width: 6px; height: 6px; border: solid #b5bac6; border-width: 0 0 2px 2px; }
.vruler { width: 16px; flex: none; overflow: hidden; background: linear-gradient(#f5f7fa 142px, #e8ebf1 142px); }
.vruler .tabmark { display: block; margin: 12px 0 0 4px; }
.vnums { display: grid; grid-auto-rows: 1fr; height: 826px; margin-top: 29px; color: #4b566c; font-size: 10px; line-height: 16px; }
.vnums span { writing-mode: vertical-rl; transform: rotate(180deg); text-align: center; }
.vnums .zero { background: linear-gradient(#8090b0, #8090b0) 0 50% / 100% 1px no-repeat; }
.canvas { flex: 1; min-width: 0; padding-left: 9px; overflow: hidden; display: flex; flex-direction: column; align-items: center; }
.hruler { width: 810px; flex: none; height: 16px; padding-left: 16px; position: relative; background: linear-gradient(90deg, transparent 122px, #e8ebf1 122px 687px, transparent 687px); }
.hnums { width: 766px; height: 16px; display: grid; grid-template-columns: repeat(47, minmax(0, 1fr)); color: #4b566c; font-size: 10px; line-height: 16px; text-align: center; }
.hnums span { display: flex; justify-content: center; background: linear-gradient(#8b97ae, #8b97ae) 0 6px / 1px 10px no-repeat; }
.hnums span:last-child { background: linear-gradient(#8b97ae, #8b97ae) 0 6px / 1px 10px no-repeat, linear-gradient(#8b97ae, #8b97ae) 100% 6px / 1px 10px no-repeat; }
.mk { position: absolute; color: #2f3a50; z-index: 3; }
.mk.first { left: 118px; top: 0; }
.mk.hang { left: 148px; top: 8px; }
.mk.right { left: 682px; top: 0; }
.mk.tabmark { left: 313px; top: 12px; }
.page { width: 810px; flex: none; height: 1146px; margin-top: 29px; padding: 0 123px 0 122px; background: #fff; box-shadow: 0 0 14px 2px #cfd3da; position: relative; color: #000; font-family: "Noto Sans CJK SC", sans-serif; text-spacing-trim: space-all; }
.crops { display: flex; justify-content: space-between; margin: 0 -24px; padding-top: 74px; }
.crops i { width: 24px; height: 24px; border: solid #c4c4c4; border-width: 0 1px 1px 0; }
.crops i + i { border-width: 0 0 1px 1px; }
.smart { position: absolute; left: 55px; top: 128px; }
.heads { list-style: none; margin: 0; padding: 0; font: bold 22px/42px "Liberation Sans", "Noto Sans CJK SC", sans-serif; white-space: nowrap; }
.h { display: flex; height: 42px; }
.h b { width: 193px; flex: none; }
.h span { background: #c6c6c6; }
.h b + span { flex: 1; min-width: 0; text-align: justify; text-align-last: justify; }
.h.first { height: 60px; }
.h.first > * { padding-top: 18px; }
.h.next { height: 60px; padding-left: 31px; }
.h.next span { padding-right: 4px; }
.h.full span { flex: 1; }
.h em { font-style: normal; }
.half { font-feature-settings: "halt"; }
.dot { font-family: "Noto Sans CJK SC", sans-serif; line-height: 0; }
.body { font-size: 16px; line-height: 32px; margin-top: -2px; color: #585858; }
.body p { margin: 0; text-align: justify; text-align-last: justify; white-space: nowrap; }
.body .ind { padding-left: 36px; }
.body .end { text-align-last: left; }
.body .tight { font-feature-settings: "halt"; }
.body b { font: 16px/16px "Liberation Serif", serif; color: #f00; }

/* floating toolbar and context menu */
.mini, .ctx { position: absolute; background: #fff; border: 1px solid #cfd4dc; box-shadow: 1px 2px 4px rgba(60, 70, 90, .35); color: #1f2533; font: 12px/16px "Open Sans", "Noto Sans CJK SC", sans-serif; }
.mini { left: 389px; top: 135px; width: 238px; height: 55px; padding: 1px 0 0 1px; }
.mini .row { margin-bottom: 3px; }
.mini .fam { width: 68px; }
.mini .size { width: 73px; }
.ctx { left: 385px; top: 207px; width: 255px; border-radius: 2px; }
.ctx button { width: 100%; height: 28px; display: flex; align-items: center; padding: 0 17px 0 8px; }
.ctx button > :first-child { margin-right: 9px; }
.ctx .on { background: #e8ebf0; }
.ctx kbd { margin-left: auto; font: inherit; color: #7b8290; }
.ctx hr { border: 0; border-top: 1px solid #dfe2e8; margin: 4px 0; }
.ctx .split { padding-right: 5px; }
.split .vline { height: 16px; margin: 0 9px 0 auto; }
.redbox { position: absolute; left: 372px; top: 412px; width: 286px; height: 74px; border: 3px solid #f00; box-shadow: 2px 2px 5px rgba(0, 0, 0, .6), inset 2px 2px 5px rgba(0, 0, 0, .5); }

/* scroll bar */
.vscroll { width: 15px; flex: none; display: flex; flex-direction: column; align-items: center; background: #e8ebf1; border-right: 1px solid #dfe2e8; color: #8793ab; }
.vscroll > svg { margin: 3px 0 9px; }
.thumb { width: 12px; height: 274px; border-radius: 6px; background: #d3d7df; margin-top: 9px; }
.nav { margin-top: auto; display: flex; flex-direction: column; align-items: center; gap: 9px; padding-bottom: 7px; }
.nav svg { fill: #8793ab; }
.nav .o2 { fill: none; }

/* style panel */
.panel { width: 261px; flex: none; display: flex; flex-direction: column; padding: 0 12px 29px; border-right: 1px solid #dfe2e8; color: #3c465a; }
.phead { display: flex; align-items: center; height: 30px; margin: 0 -4px 9px -3px; gap: 11px; }
.phead span { flex: 1; }
.phead .caret { margin-left: 3px; vertical-align: middle; }
.panel .field { background: #fff; border: 1px solid #d5d9e0; border-radius: 2px; }
.panel .field .caret { right: 8px; }
.panel .cur { height: 32px; font: bold 20px/28px "Liberation Sans", "Noto Sans CJK SC", sans-serif; color: #000; }
.cur select { padding-left: 7px; }
.pbtns { display: flex; gap: 10px; margin-top: 7px; }
.pbtns button { width: 78px; height: 23px; border: 1px solid #d5d9e0; background: #fff; }
.panel h2 { font-size: 14px; line-height: 20px; font-weight: normal; margin: 21px 0 6px; }
.styles { flex: 1; border: 1px solid #dcdfe5; border-radius: 2px; background: #fff; padding: 2px 12px 0 2px; }
.styles button { width: 100%; height: 22px; display: flex; align-items: center; justify-content: space-between; padding: 0 5px 0 6px; border: 1px solid transparent; }
.styles .on { border-color: #4a8ee0; }
.styles svg, .styles u { margin-bottom: 4px; color: #000; }
.show { display: flex; align-items: center; gap: 5px; margin-top: 8px; height: 23px; }
.show .field { flex: 1; height: 23px; }
.prev { display: flex; justify-content: space-between; margin-top: 11px; height: 16px; padding-right: 5px; }
.prev label, .prev a { display: flex; align-items: center; gap: 5px; }
.prev input { appearance: none; margin: 0; width: 13px; height: 13px; border: 1px solid #222; background: #fff; }
.prev a { color: #3d7dfa; gap: 2px; }
.prev svg { color: #f3a93c; }

/* side bar */
.side { width: 43px; flex: none; display: flex; flex-direction: column; align-items: center; gap: 4px; padding: 0 2px 15px 0; color: #2b3140; }
.grip { width: 20px; height: 5px; border: solid #c9ccd2; border-width: 1px 0; margin: 11px 0 8px; }
.side button { width: 32px; height: 32px; display: flex; align-items: center; justify-content: center; border-radius: 2px; }
.side .on { background: #d9dee7; }
.rule { width: 38px; height: 1px; margin: auto 0 17px; background: #dfe2e8; }
.meter { position: absolute; right: 0; top: 722px; width: 10px; height: 59px; border-radius: 4px 0 0 4px; border: solid #454c5a; border-width: 6px 2px 6px 4px; background: repeating-linear-gradient(transparent 0 2px, #454c5a 2px 3px), linear-gradient(#2c323e 34%, #e8d76a 36%, #9fdc8e 60%, #66d9d0); }

/* status bar */
.status { height: 29px; flex: none; display: flex; align-items: center; border-top: 1px solid #dfe2e8; padding-left: 10px; white-space: nowrap; }
.status .vline { height: 14px; margin: 0 9px 0 6px; }
.status .far { margin-left: 11px; }
.status .near { margin-right: 5px; }
.status span + span { margin-left: 15px; }
.status button { display: flex; align-items: center; gap: 3px; }
.status button + .vline { margin: 0 4px 0 5px; }
.status > button .caret { margin-left: 1px; }
.status .views { margin-left: auto; display: flex; align-items: center; gap: 2px; }
.views button { width: 24px; height: 24px; justify-content: center; border-radius: 2px; }
.views .on { background: #d9dee7; }
.status .views .vline, .status .views button + .vline { margin: 0 10px; }
.zoom { display: flex; align-items: center; padding: 0 15px 0 1px; }
.zoom span { font-size: 13px; margin: 0 5px 0 9px; color: #3c465a; }
.zoom .caret { margin: 0 11px 0 0; }
.zoom input { appearance: none; width: 148px; height: 14px; margin: 0 2px 0 8px; background: linear-gradient(90deg, #3c465a 46%, #cdd1d9 46%) 0 50% / 100% 1px no-repeat; }
.zoom input::-webkit-slider-thumb { appearance: none; width: 12px; height: 12px; border: 1px solid #444; border-radius: 6px; background: #f5f5f5; }
.zoom .i12 + .i16 { margin-left: 12px; }

/* site mark */
.mark { position: absolute; right: 10px; bottom: 11px; z-index: 4; display: flex; opacity: .8; }
.mark div { display: flex; flex-direction: column; }
.mark strong { font: bold 21px/24px "Noto Sans CJK SC", sans-serif; color: #4d94d8; }
.mark span { font: bold 16px/18px "Liberation Sans", sans-serif; color: #46bb6b; }
```
